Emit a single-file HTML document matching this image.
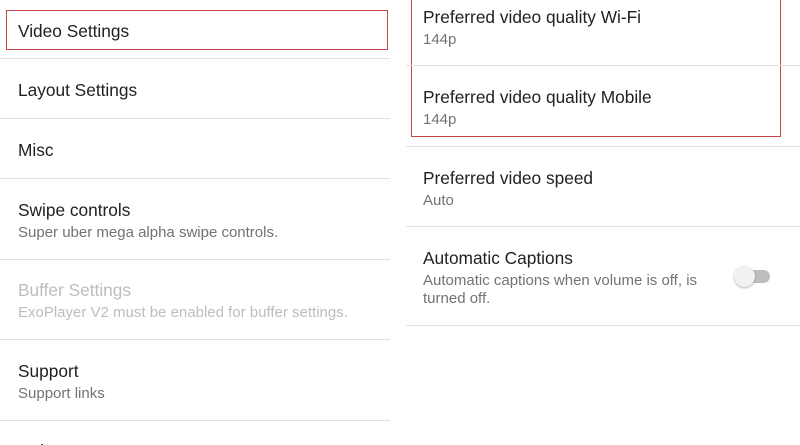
<html><head><style>
html,body{margin:0;width:800px;height:445px;overflow:hidden}
body{background:#fff;font-family:"Liberation Sans",sans-serif;position:relative}
.t{position:absolute;font-size:17.3px;color:#212121;white-space:nowrap;line-height:20px}
.s{position:absolute;font-size:15px;color:#737373;white-space:nowrap;line-height:18px}
.d{position:absolute;height:1px;background:#e2e2e2}
.g{color:#bdbdbd}
.r{position:absolute;background:#c84848}
</style></head><body>
<div class="r" style="left:6px;top:10px;width:382px;height:1px"></div>
<div class="r" style="left:6px;top:49px;width:382px;height:1px"></div>
<div class="r" style="left:6px;top:10px;width:1px;height:40px"></div>
<div class="r" style="left:387px;top:10px;width:1px;height:40px"></div>
<div class="t" style="left:18px;top:21px">Video Settings</div>
<div class="d" style="left:0;top:58px;width:390px"></div>
<div class="t" style="left:18px;top:80px">Layout Settings</div>
<div class="d" style="left:0;top:118px;width:390px"></div>
<div class="t" style="left:18px;top:140px">Misc</div>
<div class="d" style="left:0;top:178px;width:390px"></div>
<div class="t" style="left:18px;top:200px">Swipe controls</div>
<div class="s" style="left:18px;top:224px">Super uber mega alpha swipe controls.</div>
<div class="d" style="left:0;top:259px;width:390px"></div>
<div class="t g" style="left:18px;top:280px">Buffer Settings</div>
<div class="s g" style="left:18px;top:304px">ExoPlayer V2 must be enabled for buffer settings.</div>
<div class="d" style="left:0;top:339px;width:390px"></div>
<div class="t" style="left:18px;top:361px">Support</div>
<div class="s" style="left:18px;top:385px">Support links</div>
<div class="d" style="left:0;top:420px;width:390px"></div>
<div class="t" style="left:18px;top:441px">Debug</div>

<div class="r" style="left:411px;top:0;width:1px;height:137px"></div>
<div class="r" style="left:780px;top:0;width:1px;height:137px"></div>
<div class="r" style="left:411px;top:136px;width:370px;height:1px"></div>
<div class="t" style="left:423px;top:7px">Preferred video quality Wi-Fi</div>
<div class="s" style="left:423px;top:31px">144p</div>
<div class="d" style="left:406px;top:65px;width:394px"></div>
<div class="t" style="left:423px;top:87px">Preferred video quality Mobile</div>
<div class="s" style="left:423px;top:111px">144p</div>
<div class="d" style="left:406px;top:146px;width:394px"></div>
<div class="t" style="left:423px;top:168px">Preferred video speed</div>
<div class="s" style="left:423px;top:192px">Auto</div>
<div class="d" style="left:406px;top:226px;width:394px"></div>
<div class="t" style="left:423px;top:248px">Automatic Captions</div>
<div class="s" style="left:423px;top:272px">Automatic captions when volume is off, is</div>
<div class="s" style="left:423px;top:290px">turned off.</div>
<div style="position:absolute;left:740px;top:270px;width:30px;height:13px;border-radius:7px;background:#bdbdbd"></div>
<div style="position:absolute;left:734px;top:266px;width:21px;height:21px;border-radius:50%;background:#f1f1f1;box-shadow:0 1px 2px rgba(0,0,0,.3)"></div>
<div class="d" style="left:406px;top:325px;width:394px"></div>
</body></html>
